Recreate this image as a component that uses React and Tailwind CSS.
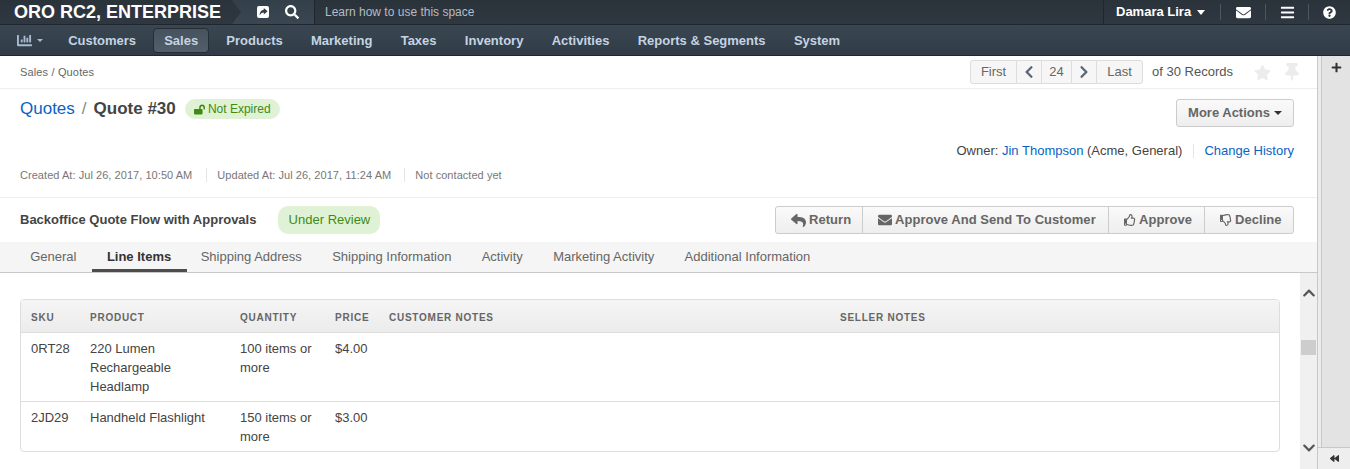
import {
  FaChartBar, FaSearch, FaEnvelope, FaBars, FaQuestionCircle, FaChevronLeft, FaChevronRight,
  FaStar, FaThumbtack, FaReply, FaRegThumbsUp, FaRegThumbsDown, FaLockOpen, FaPlus, FaBackward, FaChevronUp,
  FaChevronDown,
} from 'react-icons/fa';

const navItems = ['Customers', 'Sales', 'Products', 'Marketing', 'Taxes', 'Inventory', 'Activities', 'Reports & Segments', 'System'];
const tabs = ['General', 'Line Items', 'Shipping Address', 'Shipping Information', 'Activity', 'Marketing Activity', 'Additional Information'];

const ShareIcon = () => (
  <svg width="12" height="12" viewBox="0 0 12 12" className="shrink-0">
    <rect width="12" height="12" rx="2" fill="#ffffff" />
    <path d="M6.8 2 L10.6 5.2 L6.8 8.4 V6.5 C5 6.5 3.6 7.3 2.6 9.6 C2.6 6.4 4.2 4 6.8 3.8 Z" fill="#323d47" />
  </svg>
);

const TopBar = () => (
  <div className="flex h-[25px] bg-gradient-to-b from-[#2a323a] to-[#2f3841] border-b border-[#1f262d]">
    <div className="relative flex items-center w-[232px] pl-[14px] text-[18px] font-bold text-white whitespace-nowrap">
      ORO RC2, ENTERPRISE
      <div className="absolute left-[232px] top-0 z-10 w-0 h-0 border-y-[12px] border-y-transparent border-l-[9px] border-l-[#2c353d]" />
    </div>
    <div className="flex items-center gap-[16px] w-[82px] pl-[25px] bg-gradient-to-b from-[#33404a] to-[#3a4651] text-white text-[14px]">
      <ShareIcon />
      <FaSearch />
    </div>
    <div className="flex items-center flex-1 pl-[10px] border-l border-[#1f262d] text-[12px] text-[#b4bcc4]">Learn how to use this space</div>
    <div className="flex items-center border-l border-[#1f262d] w-[247px] text-white">
      <div className="flex items-center gap-[6px] pl-[12px] w-[116px] text-[13px] font-bold whitespace-nowrap">
        Damara Lira
        <span className="w-0 h-0 border-x-[4.5px] border-x-transparent border-t-[5px] border-t-white" />
      </div>
      <div className="flex items-center justify-center w-[45px] h-[16px] border-l border-[#4b5661] text-[15px]"><FaEnvelope /></div>
      <div className="flex items-center justify-center w-[43px] h-[16px] border-l border-[#4b5661] text-[15px]"><FaBars /></div>
      <div className="flex items-center justify-center w-[42px] h-[16px] border-l border-[#4b5661] text-[13px]"><FaQuestionCircle /></div>
    </div>
  </div>
);

const NavBar = () => (
  <div className="flex items-center h-[31px] pl-[17px] bg-gradient-to-b from-[#3a4752] to-[#303b45] border-b border-[#20272e]">
    <div className="flex items-center gap-[5px] w-[37px] text-[#a9bbd0] text-[15px]">
      <FaChartBar />
      <span className="w-0 h-0 border-x-[3px] border-x-transparent border-t-[3px] border-t-[#a9bbd0]" />
    </div>
    <div className="flex items-center">
      {navItems.map((item) => (
        <div
          key={item}
          className={
            item === 'Sales'
              ? 'w-[56px] text-center h-[25px] leading-[23px] rounded-[4px] border border-[#252d35] bg-gradient-to-b from-[#46525e] to-[#525e6a] text-[13px] font-bold text-[#c5d3e2] whitespace-nowrap ml-[3px] mr-[3px]'
              : 'px-[14.15px] h-[25px] leading-[25px] text-[13px] font-bold text-[#c5d3e2] whitespace-nowrap'
          }
        >
          {item}
        </div>
      ))}
    </div>
  </div>
);

const BreadcrumbRow = () => (
  <div className="flex items-center justify-between h-[33px] pl-[20px] pr-[16px] border-b border-[#eeeeee]">
    <div className="text-[11px] tracking-[0.15px] text-[#666666]">Sales / Quotes</div>
    <div className="flex items-center">
      <div className="flex items-center h-[24px] rounded-[3px] border border-[#dddddd] bg-[#f6f6f6] text-[13px] text-[#666666]">
        <span className="w-[46px] text-center border-r border-[#dddddd] leading-[22px]">First</span>
        <span className="w-[25px] h-full flex items-center justify-center border-r border-[#dddddd] text-[#596673] text-[14px]"><FaChevronLeft /></span>
        <span className="w-[30px] text-center border-r border-[#dddddd] leading-[22px]">24</span>
        <span className="w-[25px] h-full flex items-center justify-center border-r border-[#dddddd] text-[#596673] text-[14px]"><FaChevronRight /></span>
        <span className="w-[45px] text-center leading-[22px]">Last</span>
      </div>
      <div className="ml-[9px] text-[13px] text-[#555555] whitespace-nowrap">of 30 Records</div>
      <FaStar className="ml-[21px] text-[#ececec] text-[17px]" />
      <FaThumbtack className="ml-[12px] text-[#ececec] text-[18px]" />
    </div>
  </div>
);

const TitleBlock = () => (
  <div className="relative h-[109px] pl-[20px] pr-[23px] border-b border-[#eeeeee]">
    <div className="flex items-start justify-between pt-[10px]">
      <div className="flex items-center h-[20px] text-[17px]">
        <span className="text-[#0a63c4]">Quotes</span>
        <span className="mx-[7px] text-[#888888]">/</span>
        <span className="font-bold text-[#444444]">Quote #30</span>
        <span className="flex items-center justify-center gap-[3px] ml-[9px] w-[95px] h-[20px] rounded-full bg-[#e0f2d5] text-[12px] text-[#3f8a12]">
          <FaLockOpen className="text-[11px]" />
          Not Expired
        </span>
      </div>
      <div className="flex items-center justify-center gap-[4px] w-[118px] h-[28px] rounded-[3px] border border-[#cccccc] bg-gradient-to-b from-[#fafafa] to-[#eeeeee] text-[13px] font-bold text-[#666666]">
        More Actions
        <span className="w-0 h-0 border-x-[4px] border-x-transparent border-t-[4px] border-t-[#333333]" />
      </div>
    </div>
    <div className="flex justify-end items-center mt-[14px] text-[13px] text-[#444444]">
      <span>Owner: <span className="text-[#0a63c4]">Jin Thompson</span> (Acme, General)</span>
      <span className="ml-[11px] pl-[10px] border-l border-[#e5e5e5] text-[#0a63c4] leading-[14px]">Change History</span>
    </div>
    <div className="flex items-center mt-[7px] text-[11px] leading-[14px] tracking-[0.05px] text-[#777777]">
      <span className="pr-[14px]">Created At: Jul 26, 2017, 10:50 AM</span>
      <span className="pl-[10px] pr-[13px] border-l border-[#e5e5e5]">Updated At: Jul 26, 2017, 11:24 AM</span>
      <span className="pl-[10px] border-l border-[#e5e5e5]">Not contacted yet</span>
    </div>
  </div>
);

const ActionButton = ({ icon, label, last, width }) => (
  <div className={`flex items-center gap-[3px] h-full pl-[15px] text-[13px] tracking-[0.05px] font-bold text-[#666666] whitespace-nowrap ${width} ${last ? '' : 'border-r border-[#cccccc]'}`}>
    {icon}
    {label}
  </div>
);

const FlowRow = () => (
  <div className="flex items-center justify-between h-[44px] pl-[20px] pr-[23px]">
    <div className="flex items-center">
      <span className="text-[13px] font-bold text-[#444444]">Backoffice Quote Flow with Approvals</span>
      <span className="ml-[22px] w-[102px] text-center h-[28px] leading-[28px] rounded-[10px] bg-[#e0f2d5] text-[13px] text-[#3f8a12]">Under Review</span>
    </div>
    <div className="flex items-center h-[28px] rounded-[3px] border border-[#cccccc] bg-gradient-to-b from-[#fafafa] to-[#eeeeee]">
      <ActionButton width="w-[87px]" icon={<FaReply className="text-[15px]" />} label="Return" />
      <ActionButton width="w-[246px]" icon={<FaEnvelope className="text-[14px]" />} label="Approve And Send To Customer" />
      <ActionButton width="w-[96px]" icon={<FaRegThumbsUp className="text-[12px]" />} label="Approve" />
      <ActionButton width="w-[88px]" icon={<FaRegThumbsDown className="text-[12px]" />} label="Decline" last />
    </div>
  </div>
);

const Tabs = () => (
  <div className="flex h-[31px] pl-[15px] bg-[#f5f5f5] border-b border-[#c8c8c8] text-[13px] text-[#666666]">
    {tabs.map((tab) =>
      tab === 'Line Items' ? (
        <div key={tab} className="w-[95px] mr-[-1px] text-center leading-[29px] h-[30px] border-b-[3px] border-[#4d4d4d] font-bold text-[#333333]">{tab}</div>
      ) : (
        <div key={tab} className="px-[15.15px] leading-[29px] whitespace-nowrap">{tab}</div>
      )
    )}
  </div>
);

const rows = [
  { sku: '0RT28', product: '220 Lumen Rechargeable Headlamp', qty: '100 items or more', price: '$4.00' },
  { sku: '2JD29', product: 'Handheld Flashlight', qty: '150 items or more', price: '$3.00' },
];

const LineItems = () => (
  <div className="mx-[20px] rounded-[4px] border border-[#dddddd] overflow-hidden">
    <div className="grid grid-cols-[59px_150px_95px_54px_451px_1fr] items-center h-[33px] pl-[10px] pt-[2px] bg-gradient-to-b from-[#f5f5f5] to-[#ececec] border-b border-[#dddddd] text-[10px] font-bold tracking-[0.75px] text-[#666666]">
      <span>SKU</span>
      <span>PRODUCT</span>
      <span>QUANTITY</span>
      <span>PRICE</span>
      <span>CUSTOMER NOTES</span>
      <span>SELLER NOTES</span>
    </div>
    {rows.map((row) => (
      <div key={row.sku} className="grid grid-cols-[59px_150px_95px_54px_451px_1fr] pl-[10px] pt-[6px] pb-[5px] border-b border-[#dddddd] last:border-b-0 text-[13px] leading-[19px] text-[#444444]">
        <span>{row.sku}</span>
        <span className="w-[120px]">{row.product}</span>
        <span className="w-[80px]">{row.qty}</span>
        <span>{row.price}</span>
      </div>
    ))}
  </div>
);

const Scrollbar = () => (
  <div className="flex flex-col items-center justify-between w-[17px] bg-[#f0f0f0] pt-[13px] pb-[14px] text-[#555555] text-[14px]">
    <FaChevronUp />
    <div className="absolute top-[340px] w-[15px] h-[15px] bg-[#cdcdcd]" />
    <FaChevronDown />
  </div>
);

const Sidebar = () => (
  <div className="flex flex-col w-[33px] border-l border-[#c8c8c8]">
    <div className="flex flex-1 min-h-0">
      <div className="w-[4px] bg-[#ececec] border-r border-[#c8c8c8]" />
      <div className="flex flex-1 justify-center pt-[6px] bg-[#e3e3e3] text-[11px] text-[#333333]">
        <FaPlus />
      </div>
    </div>
    <div className="flex items-center justify-center h-[22px] bg-[#eeeeee] border-t border-[#c8c8c8] text-[9px] text-[#333333]">
      <FaBackward />
    </div>
  </div>
);

export default function App() {
  return (
    <div className="flex flex-col h-[469px] w-[1350px] overflow-hidden bg-white" style={{ fontFamily: '"Liberation Sans", Arial, sans-serif' }}>
      <TopBar />
      <NavBar />
      <div className="flex flex-1 min-h-0">
        <div className="flex flex-col w-[1317px]">
          <BreadcrumbRow />
          <TitleBlock />
          <FlowRow />
          <Tabs />
          <div className="flex flex-1 min-h-0">
            <div className="flex-1 pt-[26px] overflow-hidden">
              <LineItems />
            </div>
            <Scrollbar />
          </div>
        </div>
        <Sidebar />
      </div>
    </div>
  );
}
